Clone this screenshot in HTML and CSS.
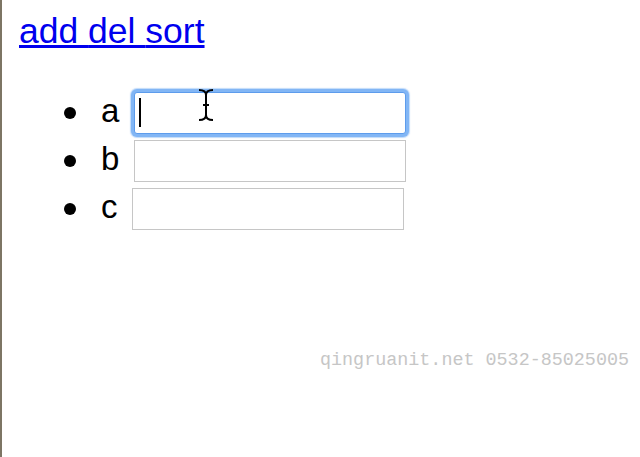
FILE: index.html
```html
<!DOCTYPE html>
<html lang="en">
<head>
  <meta charset="UTF-8">
  <title>add del sort</title>
  <link rel="stylesheet" href="styles.css">
</head>
<body>
  <div class="toolbar">
    <a href="#" class="action">add </a><a href="#" class="action">del </a><a href="#" class="action">sort</a>
  </div>

  <ul class="items">
    <li>a <span class="field-wrap"><input type="text" class="field focused"><span class="caret"></span><svg class="ibeam" width="18" height="34" viewBox="0 0 18 34"><path d="M2 2 C6 2 9 3 9 7 C9 3 12 2 16 2 M9 7 V27 M6 17 H12 M2 32 C6 32 9 31 9 27 C9 31 12 32 16 32" fill="none" stroke="#000" stroke-width="2"/></svg></span></li>
    <li>b <span class="field-wrap"><input type="text" class="field"></span></li>
    <li>c <span class="field-wrap"><input type="text" class="field"></span></li>
  </ul>

  <div class="watermark">qingruanit.net 0532-85025005</div>
</body>
</html>
```

FILE: styles.css
```css
/* General Styles */
html {
  border-left: 2px solid #7d7564;
  background: #fff;
}

body {
  margin: 0;
  padding: 11px 0 0 17px;
  font-family: 'Liberation Sans', Arial, sans-serif;
  color: #000;
  height: 446px;
}

/* Links */
.toolbar {
  font-size: 35.5px;
  line-height: 40px;
}

.action {
  color: #0000ee;
  text-decoration: underline;
}

/* List */
.items {
  margin: 36px 0 0 0;
  padding-left: 82px;
  font-size: 33px;
  line-height: 48px;
  list-style: none;
}

.items li::before {
  content: '';
  display: inline-block;
  width: 12px;
  height: 12px;
  margin-left: -37px;
  margin-right: 25px;
  border-radius: 50%;
  background: #000;
  vertical-align: middle;
}

.field-wrap {
  position: relative;
  display: inline-block;
  vertical-align: middle;
  margin-left: 5px;
}

.field {
  display: block;
  box-sizing: border-box;
  width: 272px;
  height: 42px;
  margin: 0;
  border: 1px solid #c6c6c6;
  border-radius: 0;
  background: #fff;
  outline: none;
}

.field.focused {
  border-color: #5d9cec;
  border-radius: 3px;
  box-shadow: 0 0 0 3px #82b6f5, 0 0 1px 4px rgba(130, 182, 245, 0.5);
}

.caret {
  position: absolute;
  left: 5px;
  top: 6px;
  width: 2px;
  height: 29px;
  background: #000;
}

.ibeam {
  position: absolute;
  left: 63px;
  top: -4px;
}

/* Watermark */
.watermark {
  position: absolute;
  left: 320px;
  top: 352px;
  font-family: 'Liberation Mono', 'Courier New', monospace;
  font-size: 18.4px;
  line-height: 18px;
  color: #c6c6c6;
}
```
